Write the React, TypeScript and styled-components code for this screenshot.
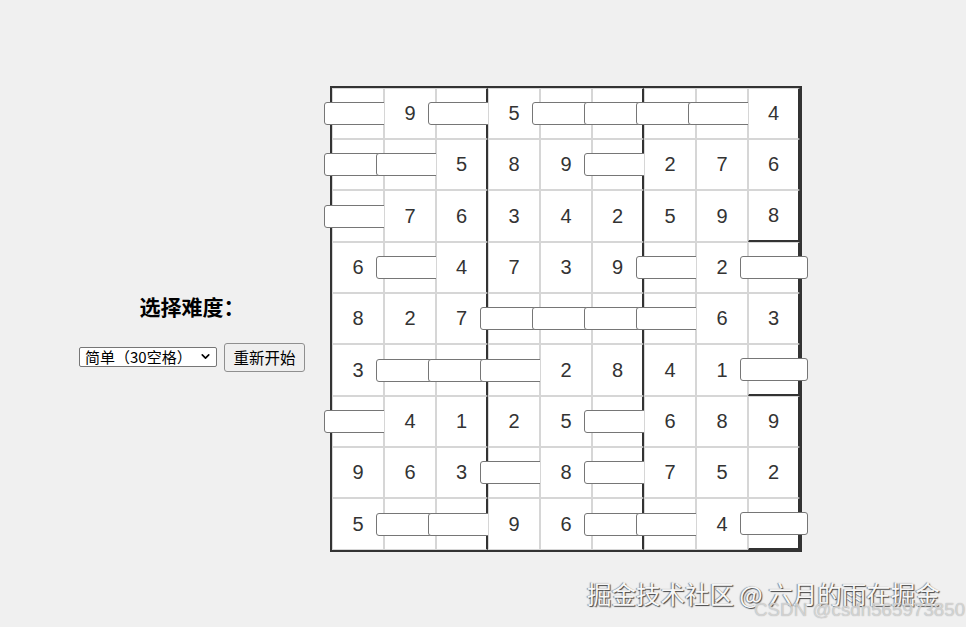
import { useState } from 'react';
import { createGlobalStyle, styled } from 'styled-components';
import { ChevronDown } from 'lucide-react';

const GlobalStyle = createGlobalStyle`
  html, body {
    margin: 0;
    padding: 0;
    background: #f0f0f0;
  }
  #root {
    min-height: 627px;
  }
`;

// 0 means an empty cell (rendered as an input)
const PUZZLE: number[][] = [
  [0, 9, 0, 5, 0, 0, 0, 0, 4],
  [0, 0, 5, 8, 9, 0, 2, 7, 6],
  [0, 7, 6, 3, 4, 2, 5, 9, 8],
  [6, 0, 4, 7, 3, 9, 0, 2, 0],
  [8, 2, 7, 0, 0, 0, 0, 6, 3],
  [3, 0, 0, 0, 2, 8, 4, 1, 0],
  [0, 4, 1, 2, 5, 0, 6, 8, 9],
  [9, 6, 3, 0, 8, 0, 7, 5, 2],
  [5, 0, 0, 9, 6, 0, 0, 4, 0],
];

export default function App() {
  const [level, setLevel] = useState('easy');
  const cells = PUZZLE.flat();

  return (
    <>
      <GlobalStyle />
      <Page>
        <Panel>
          <Title>选择难度：</Title>
          <Controls>
            <SelectWrap>
              <LevelSelect value={level} onChange={(e) => setLevel(e.target.value)}>
                <option value="easy">简单（30空格）</option>
                <option value="medium">中等（40空格）</option>
                <option value="hard">困难（50空格）</option>
              </LevelSelect>
              <Arrow size={13} strokeWidth={3} />
            </SelectWrap>
            <RestartButton>重新开始</RestartButton>
          </Controls>
        </Panel>
        <Board>
          {cells.map((n, i) => (
            <Cell key={i} $right={(i + 1) % 3 === 0} $bottom={(i + 1) % 27 === 0}>
              {n ? n : <CellInput type="text" maxLength={1} />}
            </Cell>
          ))}
        </Board>
      </Page>
      <Watermark>掘金技术社区 @ 六月的雨在掘金</Watermark>
      <SubWatermark>CSDN @csdn565973850</SubWatermark>
    </>
  );
}

const Page = styled.div`
  display: flex;
  align-items: center;
  gap: 25px;
  padding: 86px 0 0 79px;
`;

const Panel = styled.div`
  display: flex;
  flex-direction: column;
  align-items: center;
`;

const Title = styled.h3`
  margin: 25px 0 23px;
  font-family: 'Noto Sans CJK SC', sans-serif;
  font-size: 21px;
  font-weight: 700;
  line-height: 28px;
  color: #000;
`;

const Controls = styled.div`
  display: flex;
  align-items: center;
  gap: 7px;
`;

const SelectWrap = styled.div`
  position: relative;
  display: flex;
`;

const LevelSelect = styled.select`
  appearance: none;
  box-sizing: border-box;
  width: 138px;
  height: 20px;
  padding: 0 18px 0 5px;
  font-family: 'Noto Sans CJK SC', sans-serif;
  font-size: 15px;
  line-height: 18px;
  color: #000;
  background: #fff;
  border: 1px solid #767676;
  border-radius: 2px;
`;

const Arrow = styled(ChevronDown)`
  position: absolute;
  right: 5px;
  top: 3px;
  color: #000;
  pointer-events: none;
`;

const RestartButton = styled.button`
  width: 81px;
  height: 29px;
  padding: 0;
  font-family: 'Noto Sans CJK SC', sans-serif;
  font-size: 15.5px;
  color: #000;
  background: #efefef;
  border: 1px solid #8f8f8f;
  border-radius: 3px;
`;

const Board = styled.div`
  display: grid;
  grid-template-columns: repeat(9, 52px);
  border: 2px solid #333;
  background: #fff;
`;

const Cell = styled.div<{ $right: boolean; $bottom: boolean }>`
  display: flex;
  align-items: center;
  justify-content: center;
  min-height: 49px;
  background: #fff;
  border: 1px solid #d6d6d6;
  border-right: ${(p) => (p.$right ? '2px solid #333' : '1px solid #d6d6d6')};
  border-bottom: ${(p) => (p.$bottom ? '2px solid #333' : '1px solid #d6d6d6')};
  font-family: 'Liberation Sans', Arial, sans-serif;
  font-size: 20px;
  color: #333;
`;

const CellInput = styled.input`
  flex-shrink: 0;
  box-sizing: border-box;
  width: 68px;
  height: 23px;
  padding: 1px 2px;
  background: #fff;
  border: 1px solid #767676;
  border-radius: 3px;
  font-family: 'Liberation Sans', Arial, sans-serif;
  font-size: 14px;
`;

const Watermark = styled.div`
  position: absolute;
  left: 587px;
  top: 579px;
  font-family: 'Noto Sans CJK SC', sans-serif;
  font-size: 24.5px;
  line-height: 30px;
  color: #f7f7f7;
  text-shadow: 1px 1px 1px #444, -1px 0 1px #888;
  white-space: nowrap;
`;

const SubWatermark = styled.div`
  position: absolute;
  left: 754px;
  top: 600px;
  font-family: 'Liberation Sans', Arial, sans-serif;
  font-size: 18.8px;
  line-height: 20px;
  color: rgba(240, 240, 240, 0.6);
  text-shadow: 0 0 1px #9a9a9a;
  white-space: nowrap;
`;
